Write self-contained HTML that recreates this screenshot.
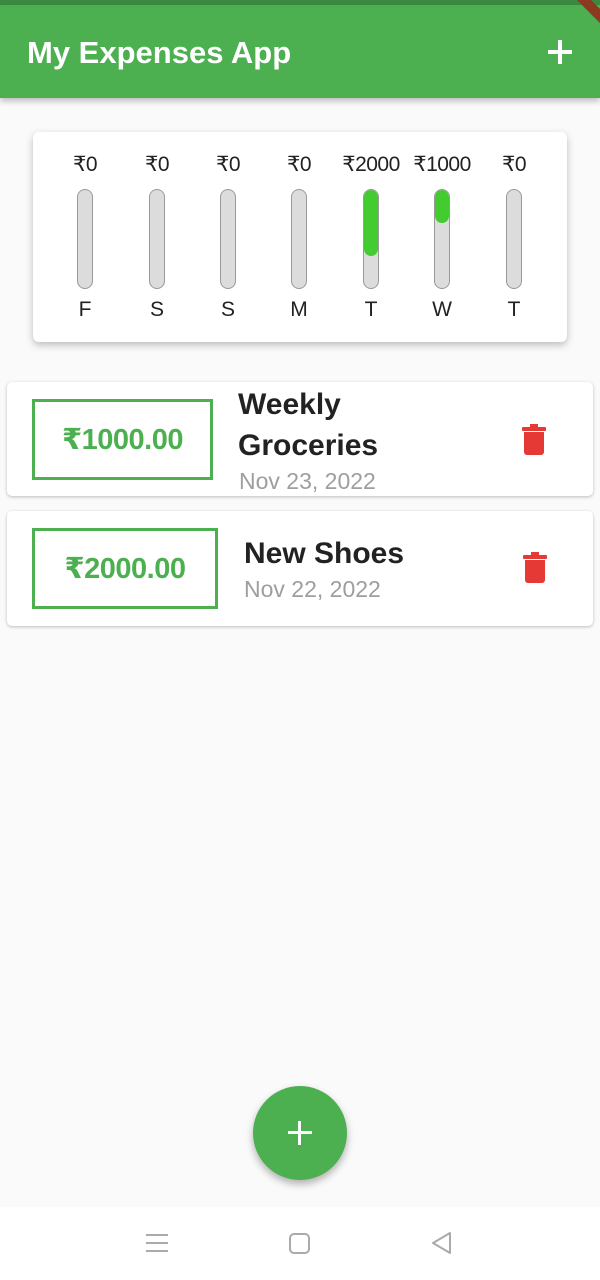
<!DOCTYPE html>
<html><head><meta charset="utf-8"><style>
*{margin:0;padding:0;box-sizing:border-box}
body{width:600px;height:1280px;background:#fafafa;font-family:"Liberation Sans","DejaVu Sans",sans-serif;position:relative;overflow:hidden}
.status{position:absolute;top:0;left:0;width:600px;height:5px;background:#3c8a40}
.bar{position:absolute;top:5px;left:0;width:600px;height:93px;background:#4caf50;box-shadow:0 3px 6px rgba(0,0,0,.25)}
.title{position:absolute;left:27px;top:30px;color:#fff;font-size:31px;font-weight:bold;letter-spacing:0}
.plus{position:absolute;left:548px;top:35px;width:24px;height:24px}
.plus:before,.plus:after{content:"";position:absolute;background:#fff}
.plus:before{left:10px;top:0;width:4px;height:24px}
.plus:after{left:0;top:10px;width:24px;height:4px}
.banner{position:absolute;right:-32px;top:-2px;width:90px;height:10px;background:#8a3a20;transform:rotate(45deg)}
.chart{position:absolute;left:33px;top:132px;width:534px;height:210px;background:#fff;border-radius:6px;box-shadow:0 3px 8px rgba(0,0,0,.25)}
.col{position:absolute;top:0;width:80px;text-align:center;color:#222}
.amt{position:absolute;top:20px;width:80px;font-size:21px;text-align:center;letter-spacing:-0.5px}
.track{position:absolute;left:32px;top:57px;width:16px;height:100px;border:1.5px solid #999;border-radius:8px;background:#dcdcdc;overflow:hidden}
.fill{position:absolute;left:0;top:0;width:100%;background:#43cc2f;border-radius:8px}
.day{position:absolute;top:166px;width:80px;font-size:21px;text-align:center}
.card{position:absolute;left:7px;width:586px;background:#fff;border-radius:5px;box-shadow:0 1px 3px rgba(0,0,0,.25)}
.price{position:absolute;border:3px solid #4caf50;color:#4caf50;font-weight:bold;font-size:29px;display:flex;align-items:center;justify-content:center;letter-spacing:-0.5px}
.name{position:absolute;color:#222;font-size:30px;font-weight:bold;line-height:41px}
.date{position:absolute;color:#9e9e9e;font-size:23px}
.trash{position:absolute;width:24px;height:32px}
.fab{position:absolute;left:253px;top:1086px;width:94px;height:94px;border-radius:50%;background:#4caf50;box-shadow:0 4px 8px rgba(0,0,0,.3)}
.fab:before,.fab:after{content:"";position:absolute;background:#fff}
.fab:before{left:45px;top:35px;width:3px;height:24px}
.fab:after{left:35px;top:45px;width:24px;height:3px}
.nav{position:absolute;top:1207px;left:0;width:600px;height:73px;background:#fff}
</style></head><body>
<div class="status"></div>
<div class="bar"><div class="title">My Expenses App</div><div class="plus"></div></div>
<div class="banner"></div>
<div class="chart">
 <div class="col" style="left:12px"><div class="amt">₹0</div><div class="track"></div><div class="day">F</div></div>
 <div class="col" style="left:84px"><div class="amt">₹0</div><div class="track"></div><div class="day">S</div></div>
 <div class="col" style="left:155px"><div class="amt">₹0</div><div class="track"></div><div class="day">S</div></div>
 <div class="col" style="left:226px"><div class="amt">₹0</div><div class="track"></div><div class="day">M</div></div>
 <div class="col" style="left:298px"><div class="amt">₹2000</div><div class="track"><div class="fill" style="height:66px"></div></div><div class="day">T</div></div>
 <div class="col" style="left:369px"><div class="amt">₹1000</div><div class="track"><div class="fill" style="height:33px"></div></div><div class="day">W</div></div>
 <div class="col" style="left:441px"><div class="amt">₹0</div><div class="track"></div><div class="day">T</div></div>
</div>
<div class="card" style="top:382px;height:114px">
 <div class="price" style="left:25px;top:17px;width:181px;height:81px">₹1000.00</div>
 <div class="name" style="left:231px;top:2px">Weekly<br>Groceries</div>
 <div class="date" style="left:232px;top:86px">Nov 23, 2022</div>
 <svg class="trash" style="left:515px;top:42px" viewBox="0 0 24 32"><rect x="0" y="3" width="24" height="4" rx="1" fill="#e53935"/><rect x="8" y="0" width="8" height="4" fill="#e53935"/><path d="M2 8h20v20a3 3 0 0 1-3 3H5a3 3 0 0 1-3-3z" fill="#e53935"/></svg>
</div>
<div class="card" style="top:511px;height:115px">
 <div class="price" style="left:25px;top:17px;width:186px;height:81px">₹2000.00</div>
 <div class="name" style="left:237px;top:22px">New Shoes</div>
 <div class="date" style="left:237px;top:65px">Nov 22, 2022</div>
 <svg class="trash" style="left:516px;top:41px" viewBox="0 0 24 32"><rect x="0" y="3" width="24" height="4" rx="1" fill="#e53935"/><rect x="8" y="0" width="8" height="4" fill="#e53935"/><path d="M2 8h20v20a3 3 0 0 1-3 3H5a3 3 0 0 1-3-3z" fill="#e53935"/></svg>
</div>
<div class="fab"></div>
<div class="nav">
 <svg style="position:absolute;left:145px;top:26px" width="24" height="20"><path d="M1 2h22M1 10h22M1 18h22" stroke="#aaa" stroke-width="2"/></svg>
 <svg style="position:absolute;left:288px;top:25px" width="24" height="24"><rect x="2" y="2" width="19" height="19" rx="4" fill="none" stroke="#aaa" stroke-width="2"/></svg>
 <svg style="position:absolute;left:430px;top:24px" width="24" height="24"><path d="M20 2L3 12l17 10z" fill="none" stroke="#aaa" stroke-width="2" stroke-linejoin="round"/></svg>
</div>
</body></html>
